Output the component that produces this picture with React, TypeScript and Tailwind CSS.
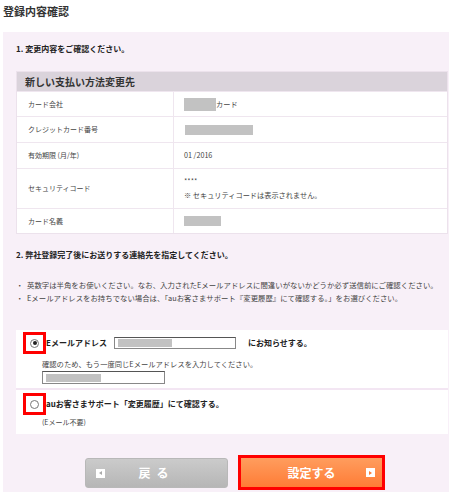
const PINK = 'bg-[#f8f0f8]';

const ROWS: { label: string; h: string; value: React.ReactNode }[] = [
  {
    label: 'カード会社',
    h: 'h-[25px]',
    value: (
      <div className="flex items-center">
        <span className="w-[32px] h-[13px] bg-[#c2c2c2]" />
        <span>カード</span>
      </div>
    ),
  },
  {
    label: 'クレジットカード番号',
    h: 'h-[26px]',
    value: <span className="block w-[68px] h-[10px] bg-[#c2c2c2] ml-px" />,
  },
  { label: '有効期限 (月/年)', h: 'h-[26px]', value: <span>01 /2016</span> },
  {
    label: 'セキュリティコード',
    h: 'h-[40px]',
    value: (
      <div className="flex flex-col gap-[3px]">
        <span>****</span>
        <span>※ セキュリティコードは表示されません。</span>
      </div>
    ),
  },
  {
    label: 'カード名義',
    h: 'h-[25px]',
    value: <span className="block w-[37px] h-[10px] bg-[#c2c2c2]" />,
  },
];

function Radio({ checked }: { checked?: boolean }) {
  return (
    <div className="w-[23px] h-[22px] border-[3px] border-[#ff0000] flex items-center justify-center bg-white">
      <span className="w-[9px] h-[9px] rounded-full border border-[#777] bg-white flex items-center justify-center">
        {checked && <span className="w-[4px] h-[4px] rounded-full bg-[#222]" />}
      </span>
    </div>
  );
}

export default function App() {
  return (
    <div
      className="w-[452px] h-[492px] bg-white text-[#444] overflow-hidden"
      style={{ fontFamily: '"Noto Sans CJK JP", "Noto Sans", sans-serif' }}
    >
      <h1 className="pl-[3px] pt-[4px] text-[11px] leading-[15px] font-bold text-[#333]">登録内容確認</h1>

      <div className={`mt-[13px] mx-[3px] h-[460px] ${PINK} pl-[13px] pr-[1px] pt-[11px]`}>
        <p className="text-[8px] leading-[12px] font-bold text-[#222]">1. 変更内容をご確認ください。</p>

        <div className="mt-[16px] border border-[#ece2ec] bg-white">
          <div className="h-[19px] bg-[#dad3db] flex items-center pl-[8px] text-[10px] font-bold text-[#333]">
            新しい支払い方法変更先
          </div>
          {ROWS.map((r) => (
            <div key={r.label} className={`flex ${r.h} border-t border-[#efe6ef]`}>
              <div className="w-[157px] shrink-0 border-r border-[#efe6ef] flex items-center pl-[11px] text-[7px]">
                {r.label}
              </div>
              <div className="flex-1 flex items-center pl-[10px] text-[7.2px]">{r.value}</div>
            </div>
          ))}
        </div>

        <p className="mt-[15px] text-[8px] leading-[12px] font-bold text-[#222]">
          2. 弊社登録完了後にお送りする連絡先を指定してください。
        </p>

        <ul className="mt-[17px] text-[7.4px] leading-[13px]">
          <li className="flex">
            <span className="w-[11px] shrink-0">・</span>
            英数字は半角をお使いください。なお、入力されたEメールアドレスに間違いがないかどうか必ず送信前にご確認ください。
          </li>
          <li className="flex">
            <span className="w-[11px] shrink-0">・</span>
            Eメールアドレスをお持ちでない場合は、「auお客さまサポート『変更履歴』にて確認する。」をお選びください。
          </li>
        </ul>

        <div className="mt-[26px] bg-white">
          <div className="h-[60px] border-b-2 border-[#f3e6f3] pl-[7px] pt-[2px]">
            <div className="flex items-center">
              <Radio checked />
              <span className="text-[8px] font-bold text-[#222] w-[68px]">Eメールアドレス</span>
              <div className="w-[122px] h-[12px] border border-[#888] border-t-[#555] flex items-center pl-[3px]">
                <span className="w-[54px] h-[8px] bg-[#c2c2c2]" />
              </div>
              <span className="ml-[12px] text-[8px] font-bold text-[#222]">にお知らせする。</span>
            </div>
            <p className="pl-[19px] mt-[4px] text-[7.3px] leading-[12px]">
              確認のため、もう一度同じEメールアドレスを入力してください。
            </p>
            <div className="ml-[19px] mt-px w-[123px] h-[13px] border border-[#888] border-t-[#555] flex items-center pl-[3px]">
              <span className="w-[55px] h-[8px] bg-[#c2c2c2]" />
            </div>
          </div>
          <div className="h-[44px] pl-[7px] pt-[3px]">
            <div className="flex items-center">
              <Radio />
              <span className="text-[8px] font-bold text-[#222]">auお客さまサポート「変更履歴」にて確認する。</span>
            </div>
            <p className="pl-[19px] mt-px text-[7px] leading-[12px]">(Eメール不要)</p>
          </div>
        </div>

        <div className="mt-[21px] flex items-center pl-[69px] gap-[10px]">
          <button className="relative w-[143px] h-[30px] rounded-[3px] border border-[#b8b8b8] bg-[linear-gradient(#cbcbcb,#b6b6b6)] flex items-center justify-center text-white text-[12px] font-bold tracking-[6px]">
            <span className="absolute left-[10px] top-[10px] w-[9px] h-[9px] bg-white flex items-center justify-center">
              <span className="w-0 h-0 border-y-[2px] border-y-transparent border-r-[3px] border-r-[#aaa]" />
            </span>
            戻る
          </button>
          <div className="w-[147px] h-[35px] border-[3px] border-[#ff0000]">
            <button className="relative w-full h-full bg-[linear-gradient(#ff9d5e,#ff7c36)] flex items-center justify-center text-white text-[12px] font-bold">
              <span className="absolute right-[7px] top-[10px] w-[9px] h-[9px] bg-white flex items-center justify-center">
                <span className="w-0 h-0 border-y-[2px] border-y-transparent border-l-[3px] border-l-[#ff7c36]" />
              </span>
              設定する
            </button>
          </div>
        </div>
      </div>
    </div>
  );
}
